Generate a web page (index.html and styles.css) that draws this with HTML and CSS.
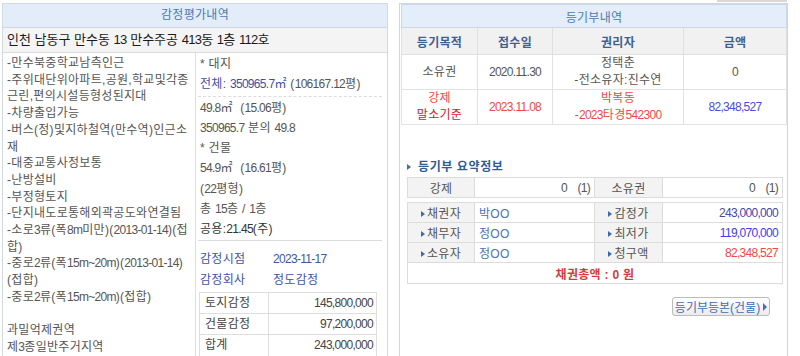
FILE: index.html
```html
<!DOCTYPE html>
<html lang="ko">
<head>
<meta charset="utf-8">
<title>감정평가내역</title>
<link rel="stylesheet" href="styles.css">
</head>
<body>
<div class="page">
  <section class="appraisal">
    <div class="panel-head">감정평가내역</div>
    <div class="addr">인천 남동구 만수동 <span class="n">13</span> 만수주공 <span class="n">413</span>동 <span class="n">1</span>층 <span class="n">112</span>호</div>
    <div class="appr-body">
      <div class="notes">-만수북중학교남측인근<br>-주위대단위아파트,공원,학교및각종<br>근린,편의시설등형성된지대<br>-차량출입가능<br>-버스(정)및지하철역(만수역)인근소<br>재<br>-대중교통사정보통<br>-난방설비<br>-부정형토지<br>-단지내도로통해외곽공도와연결됨<br>-소로<span class="n">3</span>류(폭<span class="n">8m</span>미만)(<span class="n">2013-01-14</span>)(접<br>합)<br>-중로<span class="n">2</span>류(폭<span class="n">15m~20m</span>)(<span class="n">2013-01-14</span>)<br>(접합)<br>-중로<span class="n">2</span>류(폭<span class="n">15m~20m</span>)(접합)<br>&nbsp;<br>과밀억제권역<br>제<span class="n">3</span>종일반주거지역</div>
      <div class="area">
        <div class="land">
          <div>* 대지</div>
          <div class="total"><span class="blue">전체: <span class="n">350965.7</span>㎡</span> (<span class="n">106167.12</span>평)</div>
        </div>
        <div class="spec">
          <div><span class="n">49.8</span>㎡ &nbsp;(<span class="n">15.06</span>평)</div>
          <div><span class="n">350965.7</span> 분의 <span class="n">49.8</span></div>
          <div>* 건물</div>
          <div><span class="n">54.9</span>㎡ &nbsp;(<span class="n">16.61</span>평)</div>
          <div>(<span class="n">22</span>평형)</div>
          <div>총 <span class="n">15</span>층 / <span class="n">1</span>층</div>
          <div class="share">공용:<span class="n">21.45</span>(주)</div>
        </div>
        <div class="info">
          <span class="info-label">감정시점</span><span class="info-val n">2023-11-17</span>
          <span class="info-label">감정회사</span><span class="info-val">정도감정</span>
        </div>
        <table class="appr-table">
          <colgroup><col class="c-lab"><col></colgroup>
          <tr><td class="lab">토지감정</td><td class="num n">145,800,000</td></tr>
          <tr><td class="lab">건물감정</td><td class="num n">97,200,000</td></tr>
          <tr><td class="lab">합계</td><td class="num n">243,000,000</td></tr>
        </table>
      </div>
    </div>
  </section>

  <div class="right-col">
    <div class="stub"><span></span></div>
    <section class="registry">
      <table class="reg-table">
        <colgroup><col class="r1"><col class="r2"><col class="r3"><col class="r4"></colgroup>
        <tr class="reg-head"><th colspan="4">등기부내역</th></tr>
        <tr class="reg-cols"><th>등기목적</th><th>접수일</th><th>권리자</th><th>금액</th></tr>
        <tr class="row-a"><td>소유권</td><td class="n">2020.11.30</td><td>정택춘<br>-전소유자:진수연</td><td class="n">0</td></tr>
        <tr class="row-b"><td><span class="red">강제</span><br><span class="red-strong">말소기준</span></td><td class="red n">2023.11.08</td><td class="red">박복동<br>-<span class="n">2023</span>타경<span class="n">542300</span></td><td class="amt-blue n">82,348,527</td></tr>
      </table>

      <h3 class="sum-title">등기부 요약정보</h3>
      <table class="sum sum-top">
        <colgroup><col class="s1"><col class="s2"><col class="s3"><col class="s4"></colgroup>
        <tr><th>강제</th><td class="val-r n">0 &nbsp;&nbsp;&nbsp;(1)</td><th>소유권</th><td class="val-r n">0 &nbsp;&nbsp;&nbsp;(1)</td></tr>
      </table>
      <table class="sum sum-main">
        <colgroup><col class="s1"><col class="s2"><col class="s3"><col class="s4"></colgroup>
        <tr><th><i class="tri"></i>채권자</th><td class="val-l">박OO</td><th><i class="tri"></i>감정가</th><td class="val-r v-appr n">243,000,000</td></tr>
        <tr><th><i class="tri"></i>채무자</th><td class="val-l">정OO</td><th><i class="tri"></i>최저가</th><td class="val-r v-min n">119,070,000</td></tr>
        <tr><th><i class="tri"></i>소유자</th><td class="val-l">정OO</td><th><i class="tri"></i>청구액</th><td class="val-r v-claim n">82,348,527</td></tr>
        <tr class="total-row"><td colspan="4">채권총액 : 0 원</td></tr>
      </table>
      <div class="btn-row"><button class="btn" type="button">등기부등본(건물)<i class="btn-tri"></i></button></div>
    </section>
  </div>
</div>
</body>
</html>
```

FILE: styles.css
```css
* { box-sizing: border-box; }
html, body { margin: 0; padding: 0; background: #fff; }
body {
  height: 356px;
  overflow: hidden;
  font-family: "Liberation Sans", "Noto Sans CJK KR", sans-serif;
  font-size: 12px;
  letter-spacing: 0.3px;
  color: #555;
}
.n { letter-spacing: -0.7px; }
.page { display: flex; align-items: flex-start; padding-left: 2px; }

/* left panel */
.appraisal {
  width: 386px;
  height: 420px;
  margin-top: 3px;
  border: 1px solid #d3d9e0;
}
.panel-head {
  height: 24px;
  line-height: 23px;
  border-bottom: 1px solid #cbd6e2;
  background: #e2edf9;
  color: #4b7ab3;
  text-align: center;
}
.addr {
  height: 25px;
  line-height: 24px;
  padding-left: 4px;
  border-bottom: 1px solid #dcdcdc;
  background: #f4f4f4;
  color: #1a1a1a;
  font-size: 13px;
  letter-spacing: 0;
}
.appr-body { display: flex; }
.notes {
  flex: none;
  width: 193px;
  height: 380px;
  padding: 2px 0 0 4px;
  line-height: 16.7px;
  border-right: 1px solid #dedede;
  white-space: nowrap;
}
.area { flex: 1; padding: 0 5px 0 2px; line-height: 20.3px; }
.land { padding: 1px 0 1px 2px; border-bottom: 1px dashed #dcdcdc; }
.blue { color: #3f4fa8; }
.spec { padding: 1px 0 0 2px; border-bottom: 1px solid #dcdcdc; }
.share { color: #333; }
.info {
  display: grid;
  grid-template-columns: 73px 1fr;
  padding: 8px 0 0 2px;
  line-height: 21px;
  color: #3d55a8;
}
.appr-table {
  width: 178px;
  margin: 1px 0 0 1px;
  border-collapse: collapse;
  table-layout: fixed;
}
.c-lab { width: 69px; }
.appr-table td { height: 21px; border: 1px solid #dedede; padding: 0; color: #444; }
.appr-table .lab { padding-left: 5px; }
.appr-table .num { text-align: right; padding-right: 3px; }

/* right panel */
.right-col { width: 389px; margin-left: 11px; }
.stub { height: 3px; display: flex; justify-content: flex-end; }
.stub span { width: 70px; height: 2px; margin-right: 1px; background: #d8d8d8; }
.registry {
  height: 420px;
  padding: 0 1px;
  border: 1px solid #d0d6dd;
}
.reg-table { width: 385px; border-collapse: collapse; table-layout: fixed; }
.r1 { width: 76px; }
.r2 { width: 75px; }
.r3 { width: 131px; }
.r4 { width: 103px; }
.reg-head th {
  height: 23px;
  padding: 0;
  background: #e3eefa;
  color: #4b7ab3;
  font-weight: normal;
  border: 1px solid #cdd8e4;
}
.reg-cols th {
  height: 27px;
  padding: 0;
  background: #f1f1f1;
  color: #3f5f8f;
  font-weight: bold;
  border: 1px solid #e0e0e0;
}
.reg-table td {
  padding: 0;
  border: 1px solid #e2e2e2;
  text-align: center;
  line-height: 17px;
  color: #555;
}
.row-a td { height: 34px; }
.row-b td { height: 33px; }
.reg-table td.red, .red { color: #f04848; }
.red-strong { color: #e0102a; }
.reg-table td.amt-blue { color: #4a4ae6; }

.sum-title {
  display: flex;
  align-items: center;
  margin: 34px 0 2px 6px;
  line-height: 16px;
  font-size: 12px;
  font-weight: bold;
  letter-spacing: 0.6px;
  color: #2e5d97;
}
.sum-title::before {
  content: "";
  width: 0;
  height: 0;
  margin-right: 7px;
  border-left: 4px solid #3a6fb0;
  border-top: 3px solid transparent;
  border-bottom: 3px solid transparent;
}
.sum { width: 375px; margin-left: 6px; border-collapse: collapse; table-layout: fixed; }
.sum-main { margin-top: 4px; }
.s1 { width: 67px; }
.s2 { width: 120px; }
.s3 { width: 68px; }
.s4 { width: 120px; }
.sum th, .sum td { height: 20px; padding: 0; border: 1px solid #dcdcdc; }
.sum th { background: #f3f3f3; font-weight: normal; color: #555; text-align: center; }
.val-r { text-align: right; padding-right: 4px !important; color: #555; }
.val-l { text-align: left; padding-left: 4px !important; color: #4a72b8; }
.v-appr { color: #4646b0; }
.v-min { color: #3c3cf0; }
.v-claim { color: #f04848; }
.tri {
  display: inline-block;
  width: 0;
  height: 0;
  margin-right: 2px;
  vertical-align: 1px;
  border-left: 4px solid #3d6bb0;
  border-top: 3px solid transparent;
  border-bottom: 3px solid transparent;
}
.total-row td {
  height: 21px;
  text-align: center;
  font-weight: bold;
  color: #d23b3b;
}
.btn-row { display: flex; justify-content: flex-end; margin: 13px 16px 0 0; }
.btn {
  display: flex;
  align-items: center;
  justify-content: center;
  gap: 3px;
  width: 98px;
  height: 19px;
  padding: 0;
  border: 1px solid #bcbcbc;
  border-radius: 3px;
  background: linear-gradient(#ffffff, #ebebeb);
  color: #3a70b8;
  font-family: inherit;
  font-size: 12px;
  letter-spacing: 0;
}
.btn-tri {
  width: 0;
  height: 0;
  border-left: 4px solid #3a70b8;
  border-top: 4px solid transparent;
  border-bottom: 4px solid transparent;
}
```
